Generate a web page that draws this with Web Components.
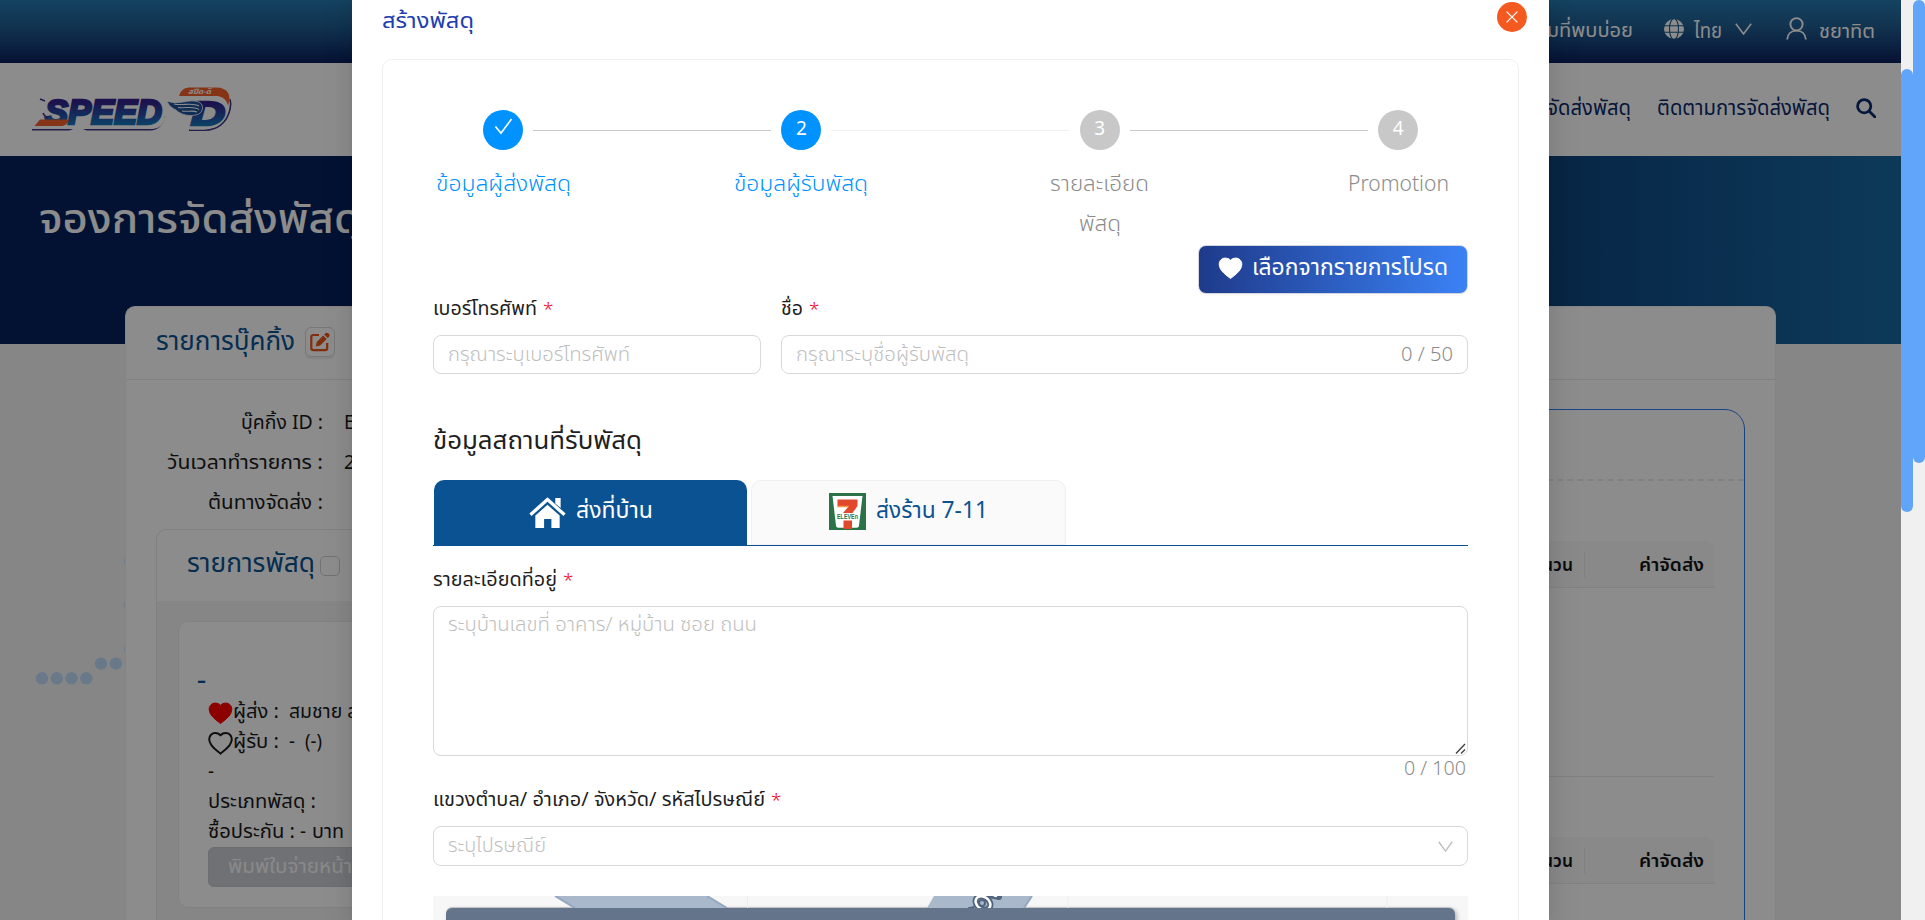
<!DOCTYPE html>
<html lang="th">
<head>
<meta charset="utf-8">
<title>SPEED-D</title>
<style>
html,body{margin:0;height:100%;overflow:hidden}
body{font-family:"Noto Sans","Noto Sans Thai",sans-serif;background:#f5f5f5}
</style>
</head>
<body>
<speed-app></speed-app>
<script>
const define = (name, html, after) => {
  const tpl = document.createElement('template');
  tpl.innerHTML = html;
  customElements.define(name, class extends HTMLElement {
    connectedCallback() {
      if (this.shadowRoot) return;
      this.attachShadow({mode: 'open'}).append(tpl.content.cloneNode(true));
      if (after) after(this, this.shadowRoot);
    }
  });
};

/* One line of text set to a given width: w = width, s = size, h = line height, c = colour, k = weight */
define('fit-text', `<style>
:host{display:block;flex:none;white-space:nowrap}
span{display:inline-block;transform-origin:0 50%;white-space:nowrap;vertical-align:top}
</style><span><slot></slot></span>`, (el, r) => {
  const a = n => el.getAttribute(n), span = r.querySelector('span');
  el.style.fontSize = (a('s') || 19) + 'px';
  const h = (a('h') || 30) + 'px';
  el.style.lineHeight = h; el.style.height = h;
  if (a('c')) el.style.color = a('c');
  if (a('k')) el.style.fontWeight = a('k');
  if (a('w')) {
    el.style.width = a('w') + 'px';
    const n = span.getBoundingClientRect().width;
    if (n) span.style.transform = 'scaleX(' + (a('w') / n) + ')';
  }
});

const heart = 'M12.5 21.6C10.4 19.4 1.2 14.4 1.2 7.2C1.2 3.6 4 1.1 7.2 1.1C9.3 1.1 11.3 2 12.5 3.2C13.7 2 15.7 1.1 17.8 1.1C21 1.1 23.8 3.6 23.8 7.2C23.8 14.4 14.6 19.4 12.5 21.6Z';
const icons = {
  heart: ['0 0 25 23', `<path d="${heart}" fill="currentColor" stroke="currentColor"/>`],
  'heart-o': ['0 0 25 23', `<path d="${heart}" fill="none" stroke="currentColor" stroke-width="2"/>`],
  check: ['0 0 20 18', '<path d="M1.5 9l5.8 7L18.5 1" fill="none" stroke="currentColor" stroke-width="1.7"/>'],
  close: ['0 0 12 12', '<path d="M.6.6l10.8 10.8M11.4.6L.6 11.4" stroke="currentColor" stroke-width="1.3"/>'],
  down: ['0 0 16 12', '<path d="M.8 .8L8 11L15.2 .8" fill="none" stroke="currentColor" stroke-width="1.5"/>'],
  globe: ['0 0 20 20', '<circle cx="10" cy="10" r="10" fill="currentColor"/><g fill="none" stroke="#1b5a8c" stroke-width="1.1"><ellipse cx="10" cy="10" rx="4.5" ry="10.5"/><path d="M0 6.8h20M0 13.3h20"/></g>'],
  user: ['0 0 22 24', '<g fill="none" stroke="currentColor" stroke-width="2"><circle cx="11" cy="7.6" r="6.4"/><path d="M1.2 23.5c.4-6 4.6-9.3 9.8-9.3s9.4 3.3 9.8 9.3"/></g>'],
  search: ['0 0 20 20', '<g fill="none" stroke="currentColor" stroke-width="2.8"><circle cx="8.2" cy="8.2" r="6.6"/><path d="M13 13l6 6" stroke-linecap="round"/></g>'],
  edit: ['0 0 20 20', '<path d="M9 3H3.4C2 3 1.3 3.8 1.3 5v11c0 1.400.8 2.200 2.200 2.200H15c1.400 0 2.200-.8 2.200-2.200v-5" fill="none" stroke="currentColor" stroke-width="2.200"/><path d="M5.800 14.400l.9-4.300L13.200 3.600l3.500 3.500-6.500 6.500zM14.200 2.600l1.300-1.300c.8-.8 1.900-.8 2.700 0l.8.8c.8.8.8 1.900 0 2.700l-1.300 1.300z" fill="currentColor"/>'],
  home: ['0 0 38 31', '<path d="M1.500 17.800L19 2.500l17.500 15.300" fill="none" stroke="currentColor" stroke-width="3.400"/><path d="M27 1h5.500v10L27 6.500zM6.500 18.500L19 7.800l12.500 10.700V31H23v-9h-7.500v9h-9z" fill="currentColor"/>'],
  seven: ['0 0 37 37', '<path d="M0 0h37v37H0z" fill="#2b7249"/><path d="M3.500 3h30L30 32.500c-.2 1.500-1 2.200-2.300 2.200H9.300c-1.300 0-2.100-.7-2.300-2.200z" fill="#fff"/><path d="M8.500 6.500h20v6.500l-5 7h-9.500l5.500-6.500H8.500z" fill="#e2492c"/><path d="M14.500 27.500h8.500V36h-8.500z" fill="#e2492c"/><path d="M8.500 13.500h11" stroke="#f39a4a" stroke-width="1.500"/><text x="8" y="26" font-family="Liberation Sans,sans-serif" font-weight="700" font-size="7" textLength="21" lengthAdjust="spacingAndGlyphs" fill="#2b7249">ELEVEn</text>']
};
define('ui-icon', '<style>:host{display:block;flex:none}svg{display:block;width:100%;height:100%}</style>', (el, r) => {
  const [vb, body] = icons[el.getAttribute('name')];
  el.style.width = el.getAttribute('w') + 'px';
  el.style.height = el.getAttribute('h') + 'px';
  r.innerHTML += `<svg viewBox="${vb}" preserveAspectRatio="none">${body}</svg>`;
});

define('speed-logo', `<style>:host{display:block;width:206px;height:48px}svg{display:block;overflow:visible}
text{font-family:"Liberation Sans",sans-serif;font-weight:700;font-style:italic}</style>
<svg width="206" height="48" viewBox="0 0 206 48">
<defs><linearGradient id="g" x1="0" y1="0" x2="0" y2="1"><stop offset=".25" stop-color="#34228c"/><stop offset=".85" stop-color="#1678bd"/></linearGradient></defs>
<path d="M1 43.800h37l4-1.500h10l4 1.500h63c8 0 13-6 15-13" fill="none" stroke="#3e3585" stroke-width="1.600"/>
<path d="M158 44.200h15c14 0 23-8 26-21 1-4 1-7 0-10" fill="none" stroke="#3e3585" stroke-width="1.600"/>
<path d="M3 41.800h118c7 0 11-5 13-11M159 42.200h14c13 0 21-8 24-20" fill="none" stroke="#fff" stroke-width="2.400"/>
<g fill="url(#g)" stroke="url(#g)" stroke-width="2.600"><text x="14" y="38.300" font-size="35" textLength="117" lengthAdjust="spacingAndGlyphs">SPEED</text></g>
<path d="M9 33.500h29c-1 4-4 6.500-8 6.500H3.500z" fill="#f4602b"/><path d="M9 13l5 2M12 27c1 3 3 4 5 5" fill="none" stroke="#3e3585" stroke-width="1.500"/>
<path d="M148 10c2-6 5-8.500 12-8.500h25c12 0 16 8 12 18-2-7-6-9.500-13-9.500z" fill="#f4602b"/>
<text x="160" y="39" font-size="34" fill="url(#g)" stroke="url(#g)" stroke-width="2.600" textLength="34" lengthAdjust="spacingAndGlyphs">D</text>
<path d="M136 15c12 5 22-3 32 1 6 3 4 12-3 13-10 2-17-2-20-5-4-2-7-4-9-9z" fill="#1f539b" stroke="#fff" stroke-width=".8"/>
<path d="M143 18c9 2 18-2 25 2M147 21.500c8 1 15-2 21 2M151 25c6 1 11-1 15 1" fill="none" stroke="#fff" stroke-width="1.100"/>
<text x="157" y="7.500" font-size="7" fill="#fff" style="font-family:'Noto Sans Thai','Noto Sans',sans-serif" textLength="23" lengthAdjust="spacingAndGlyphs">สปีด-ดี</text>
</svg>`);

define('top-bar', `<style>
:host{display:flex;height:63px;justify-content:flex-end;align-items:flex-start;box-sizing:border-box;padding:0 26px 0 0;color:#fff;background:linear-gradient(#267ab0,#1f5c90 45%,#0c205e)}
ui-icon{margin-top:19px}
</style>
<fit-text w="127" s="20" h="60">คำถามที่พบบ่อย</fit-text>
<ui-icon name="globe" w="20" h="20" style="margin-left:31px"></ui-icon>
<fit-text w="28" s="22" h="58" style="margin-left:10px">ไทย</fit-text>
<ui-icon name="down" w="17" h="12" style="margin:23px 0 0 13px"></ui-icon>
<ui-icon name="user" w="21" h="23" style="margin:17px 12px 0 34px"></ui-icon>
<fit-text w="56" s="20" h="61">ชยาทิต</fit-text>`);

define('nav-bar', `<style>
:host{display:flex;height:93px;background:#fff;color:#0c2a6e;box-sizing:border-box;padding:0 25px 0 31px}
.r{margin-left:auto;display:flex}speed-logo{margin-top:23px}
</style>
<speed-logo></speed-logo><div class="r">
<fit-text w="147" s="21" h="88">จองการจัดส่งพัสดุ</fit-text>
<fit-text w="173" s="21" h="88" style="margin-left:26px">ติดตามการจัดส่งพัสดุ</fit-text>
<ui-icon name="search" w="20" h="20" style="margin:35px 0 0 26px"></ui-icon></div>`);

define('page-hero', `<style>:host{display:block;height:188px;box-sizing:border-box;padding:32px 39px;color:#fff;
background:linear-gradient(90deg,#06215d 0 60%,#0f4377 81%,#0f4a85 84%,#196aa3 100%)}</style>
<fit-text w="322" s="41" h="59" k="500">จองการจัดส่งพัสดุ</fit-text>`);

define('parcel-card', `<style>
:host{display:block;width:420px;height:287px;margin:20px 0 0 21px;box-sizing:border-box;border:1px solid #ececec;border-radius:10px;background:#fff;padding:45px 29px 0;color:#1a1a1a}
.row{display:flex;height:30px;align-items:center}
.row fit-text{margin-top:-2px}
.b{width:260px;height:40px;border-radius:6px;background:#cbced6;box-sizing:border-box;border:1px solid #c4c7ce;padding-left:19px}
</style>
<div class="row" style="margin-left:-11px"><fit-text s="22" w="9" c="#0a5291" k="600" style="margin-top:-7px">-</fit-text></div>
<div class="row"><ui-icon name="heart" w="25" h="23" style="color:#f00;margin-top:3px"></ui-icon><fit-text w="46">ผู้ส่ง :</fit-text><fit-text w="103" style="margin-left:10px">สมชาย สมศรี</fit-text></div>
<div class="row"><ui-icon name="heart-o" w="25" h="23" style="margin-top:3px"></ui-icon><fit-text w="46">ผู้รับ :</fit-text><fit-text w="6" style="margin-left:10px">-</fit-text><fit-text w="17" style="margin-left:10px">(-)</fit-text></div>
<div class="row"><fit-text w="6">-</fit-text></div>
<div class="row"><fit-text w="108">ประเภทพัสดุ :</fit-text></div>
<div class="row"><fit-text w="87">ซื้อประกัน :</fit-text><fit-text w="6" style="margin-left:5px">-</fit-text><fit-text w="32" style="margin-left:6px">บาท</fit-text></div>
<div class="b"><fit-text w="163" h="36" s="20" c="#fafafa">พิมพ์ใบจ่ายหน้าพัสดุ</fit-text></div>`);

define('price-table', `<style>
:host{display:block;width:500px;flex:none}
.h{height:47px;box-sizing:border-box;display:flex;justify-content:flex-end;align-items:center;background:#fafafa;border-radius:0 8px 0 0;border-bottom:1px solid #ececec;padding-right:10px;color:#141414}
i{width:1px;height:27px;background:#ebebeb;margin:0 54px 0 11px}
.b{height:189px;box-sizing:border-box;border-bottom:1px solid #ebebeb}
</style>
<div class="h"><fit-text w="48" s="17" h="33" k="600">จำนวน</fit-text><i></i><fit-text w="65" s="17" h="33" k="600">ค่าจัดส่ง</fit-text></div>
<div class="b"></div>`);

define('booking-card', `<style>
:host{display:block;width:1651px;height:640px;margin:-38px auto 0;box-sizing:border-box;border:1px solid #f0f0f0;border-bottom:0;border-radius:10px 10px 0 0;background:#fff;position:relative;left:0}
.head{height:72px;border-bottom:1px solid #ececec;display:flex;padding-left:30px;box-sizing:content-box}
.edit{width:28px;height:28px;border:1px solid #d9d9d9;border-radius:6px;display:grid;place-items:center;color:#ea5514;margin:20px 0 0 10px;box-shadow:0 2px 0 #0001}
.cols{display:flex;justify-content:space-between}
.l{width:420px}.info{height:149px;box-sizing:border-box;padding-top:23px;display:grid;grid-auto-rows:40px;color:#1a1a1a}
.info div{display:flex;gap:21px}.info fit-text:first-child{margin-left:auto}.info .v{width:202px}
.list{margin-left:30px;width:480px;border:1px solid #ebebeb;border-radius:10px 10px 0 0;background:#f5f5f5;height:400px}
.lh{height:71px;background:#fff;border-radius:10px 10px 0 0;display:flex;padding-left:30px;box-sizing:border-box}
.cb{width:18px;height:18px;border:1px solid #cfcfcf;border-radius:5px;margin:26px 0 0 5px}
.r{width:560px;height:560px;margin:29px 30px 0 0;border:1px solid #2e7cf0;border-radius:20px;box-sizing:border-box;display:flex;flex-direction:column;align-items:flex-end;overflow:hidden}
.dash{width:100%;height:71px;flex:none;border-bottom:2px dashed #e9e9e9;margin-bottom:60px;box-sizing:border-box}
price-table{margin:0 30px 60px 0}
</style>
<div class="head"><fit-text w="139" s="26" h="67" c="#0a5291">รายการบุ๊คกิ้ง</fit-text><div class="edit"><ui-icon name="edit" w="20" h="20"></ui-icon></div></div>
<div class="cols"><div class="l">
<div class="info"><div><fit-text w="82" h="38">บุ๊คกิ้ง ID :</fit-text><span class="v"><fit-text h="38">EBK</fit-text></span></div>
<div><fit-text w="156" h="38">วันเวลาทำรายการ :</fit-text><span class="v"><fit-text h="38">2024</fit-text></span></div>
<div><fit-text w="115" h="38">ต้นทางจัดส่ง :</fit-text><span class="v"></span></div></div>
<div class="list"><div class="lh"><fit-text w="128" s="26" h="65" c="#0a5291">รายการพัสดุ</fit-text><div class="cb"></div></div><parcel-card></parcel-card></div>
</div><div class="r"><div class="dash"></div><price-table></price-table><price-table></price-table></div></div>`);

define('form-label', `<style>:host{display:flex;height:41px;gap:6px;color:#1f1f1f}b{font-weight:300;color:#f5001d;font-size:19px;line-height:31px}</style>
<slot></slot><b>*</b>`);

define('form-field', `<style>:host{display:flex;box-sizing:border-box;border:1px solid #d9d9d9;border-radius:8px;height:39px;padding:0 14px;justify-content:space-between;background:#fff;color:#bfbfbf;font-weight:300}
</style><slot></slot><slot name="end"></slot>`);

define('step-item', `<style>
:host{display:block;width:298.400px;flex:none;color:#0092ff;font-weight:300}:host([wait]){color:#8c8c8c}
.top{display:flex;align-items:center;gap:10px;padding-left:50px;height:40px}
.c{width:40px;height:40px;flex:none;border-radius:50%;background:#0092ff;color:#fff;display:flex;justify-content:center;font-size:19px;line-height:36px;font-weight:400}
:host([wait]) .c{background:#c8c8c8}.c ui-icon{margin-top:8px}
.line{width:238px;height:1px;flex:none;background:#c8c8c8;margin-top:1px}:host([faint]) .line{background:#f0f0f0}:host([last]) .line{display:none}
.t{width:140px;margin-top:12px;display:flex;flex-direction:column;align-items:center}
</style><div class="top"><div class="c"></div><div class="line"></div></div><div class="t"><slot></slot></div>`, (el, r) => {
  const n = el.getAttribute('n');
  r.querySelector('.c').innerHTML = n ? n : '<ui-icon name="check" w="19" h="17"></ui-icon>';
});

define('map-strip', `<style>:host{display:block;height:24px;overflow:hidden;background:#f7f7f7}svg{display:block;width:1035px;height:12px}
.bar{margin:0 13px;height:20px;background:#64748b;border-radius:6px 6px 0 0;box-shadow:0 -1px 0 #c4c4c4,2px 1px 4px #0004}</style>
<svg viewBox="0 0 1035 12"><path d="M122 0h152l20 12H142zM501 0h98l-8 12h-97z" fill="#a9b8cb"/><path d="M122 0l20 12M274 0l20 12M599 0l-8 12" stroke="#93a7bf" stroke-width="2"/><path d="M314.500 0v12M635 0v12M954 0v12" stroke="#eee"/>
<g fill="none" stroke-linecap="round"><g stroke="#51647d" stroke-width="6"><ellipse cx="550" cy="7" rx="8" ry="6" transform="rotate(35 550 7)"/><path d="M537 14l5-1M557-1l9 2"/></g><g stroke="#fff" stroke-width="2.500"><ellipse cx="550" cy="7" rx="8" ry="6" transform="rotate(35 550 7)"/><path d="M556-3l7 3M538 14l4-1"/></g><circle cx="549" cy="7" r="3" stroke="#51647d" stroke-width="2"/></g></svg>
<div class="bar"></div>`);

define('parcel-modal', `<style>
:host{display:block;width:1197px;height:920px;background:#fff;box-sizing:border-box;padding:0 30px;overflow:hidden}
.head{display:flex;justify-content:space-between;height:59px}
.x{width:30px;height:30px;border-radius:50%;background:#f4591f;color:#fff;display:grid;place-items:center;margin:2px -8px 0 0}
.card{border:1px solid #f0f0f0;border-radius:10px;height:900px;padding:50px 50px 0 50px}
.steps{display:flex;height:135px}
.fav{width:270px;height:49px;box-sizing:border-box;margin-left:auto;border:1px solid #d3d6de;border-radius:8px;background:linear-gradient(90deg,#1e3a8a,#3b82f6) border-box;color:#fff;display:flex;padding-left:19px;box-shadow:0 2px 0 #00000005}
.two{display:grid;grid-template-columns:328px 1fr;gap:0 20px}
.tabs{display:flex;gap:4px;height:65px;border-bottom:1px solid #0a5291;margin:20px 0 19px}
.tab{width:313px;box-sizing:border-box;border-radius:10px 10px 0 0;display:flex}
.a{background:#0a5291;color:#fff;padding-left:95px;margin-left:1px}.b{background:#fafafa;border:1px solid #f0f0f0;color:#0a5291;padding-left:77px;width:315px}
.area{height:150px;align-items:flex-start;position:relative}
.grip{position:absolute;right:1px;bottom:1px;width:11px;height:11px}
.cnt{display:flex;justify-content:flex-end;height:29px;font-weight:300;padding-right:2px}
</style>
<div class="head"><fit-text w="92" s="22" h="38" c="#1e40af">สร้างพัสดุ</fit-text><div class="x"><ui-icon name="close" w="12" h="12"></ui-icon></div></div>
<div class="card">
<div class="steps">
<step-item><fit-text w="135" s="22" h="40">ข้อมูลผู้ส่งพัสดุ</fit-text></step-item>
<step-item n="2" faint><fit-text w="134" s="22" h="40">ข้อมูลผู้รับพัสดุ</fit-text></step-item>
<step-item n="3" wait><fit-text w="99" s="22" h="40">รายละเอียด</fit-text><fit-text w="42" s="22" h="40">พัสดุ</fit-text></step-item>
<step-item n="4" wait last><fit-text w="101" s="22" h="40">Promotion</fit-text></step-item>
</div>
<div class="fav"><ui-icon name="heart" w="25" h="23" style="margin:11px 9px 0 0"></ui-icon><fit-text w="196" s="23" h="40">เลือกจากรายการโปรด</fit-text></div>
<div class="two">
<form-label><fit-text w="104" h="28">เบอร์โทรศัพท์</fit-text></form-label><form-label><fit-text w="22" h="28">ชื่อ</fit-text></form-label>
<form-field><fit-text w="182" s="20" h="35">กรุณาระบุเบอร์โทรศัพท์</fit-text></form-field>
<form-field><fit-text w="173" s="20" h="35">กรุณาระบุชื่อผู้รับพัสดุ</fit-text><fit-text slot="end" w="52" s="20" h="35" c="#8c8c8c">0 / 50</fit-text></form-field>
</div>
<fit-text w="209" s="24" h="40" c="#1f1f1f" style="margin-top:46px">ข้อมูลสถานที่รับพัสดุ</fit-text>
<div class="tabs"><div class="tab a"><ui-icon name="home" w="37" h="31" style="margin:17px 10px 0 0"></ui-icon><fit-text w="77" s="23" h="58">ส่งที่บ้าน</fit-text></div>
<div class="tab b"><ui-icon name="seven" w="37" h="37" style="margin:12px 10px 0 0"></ui-icon><fit-text w="112" s="23" h="57">ส่งร้าน 7-11</fit-text></div></div>
<form-label><fit-text w="124" h="28">รายละเอียดที่อยู่</fit-text></form-label>
<form-field class="area"><fit-text w="309" s="20" h="33">ระบุบ้านเลขที่ อาคาร/ หมู่บ้าน ซอย ถนน</fit-text><svg slot="end" class="grip" viewBox="0 0 11 11"><path d="M1 10.500L10 1M6 10.500L10 6.500" stroke="#444" stroke-width="1.400"/></svg></form-field>
<div class="cnt"><fit-text w="62" s="20" h="24" c="#8c8c8c">0 / 100</fit-text></div>
<form-label><fit-text w="332" h="28">แขวงตำบล/ อำเภอ/ จังหวัด/ รหัสไปรษณีย์</fit-text></form-label>
<form-field style="height:40px"><fit-text w="98" s="20" h="35">ระบุไปรษณีย์</fit-text><ui-icon slot="end" name="down" w="15" h="11" style="margin-top:14px"></ui-icon></form-field>
<map-strip style="margin-top:30px"></map-strip>
</div>`);

define('scroll-rail', `<style>:host{display:block;width:12px;height:920px;background:#f0f0f0}div{background:#60a5fa;border-radius:6px}</style><div></div>`, (el, r) => {
  const d = r.querySelector('div');
  el.style.paddingTop = el.getAttribute('from') + 'px';
  el.style.boxSizing = 'border-box';
  d.style.height = el.getAttribute('size') + 'px';
});

define('speed-app', `<style>
:host{display:flex;width:1925px;height:920px;overflow:hidden;position:relative}
main{width:1901px;height:920px;overflow:hidden;background:#f5f5f5}
.dots{position:absolute;left:0;top:540px;width:125px;height:160px}
.mask{position:absolute;left:0;top:0;width:1901px;height:920px;background:rgba(0,0,0,.45);box-sizing:border-box;padding-left:352px;overflow:hidden}
parcel-modal{box-shadow:0 6px 16px rgba(0,0,0,.08),0 3px 6px -4px rgba(0,0,0,.12),0 9px 28px 8px rgba(0,0,0,.05)}
</style>
<main><top-bar></top-bar><nav-bar></nav-bar><page-hero></page-hero><booking-card></booking-card></main>
<svg class="dots" viewBox="0 0 125 160"><g fill="#c0dcfb"><circle cx="42" cy="138.300" r="6.200"/><circle cx="56.800" cy="138.300" r="6.200"/><circle cx="71.500" cy="138.300" r="6.200"/><circle cx="86.300" cy="138.300" r="6.200"/><circle cx="101" cy="123.600" r="6.200"/><circle cx="115.800" cy="123.600" r="6.200"/><circle cx="130.300" cy="109" r="6.200"/><circle cx="130.300" cy="64.500" r="6.200"/><circle cx="130.300" cy="21" r="6.200"/></g></svg>
<scroll-rail from="69" size="443"></scroll-rail><scroll-rail from="0" size="463"></scroll-rail>
<div class="mask"><parcel-modal></parcel-modal></div>`);
</script>
</body>
</html>
